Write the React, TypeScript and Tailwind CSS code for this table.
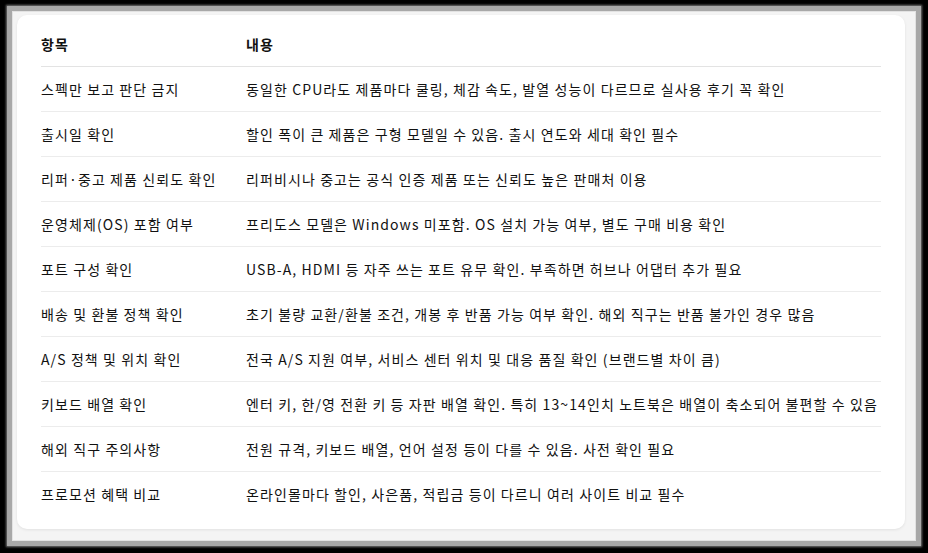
const ROWS: [string, string][] = [
  ["스펙만 보고 판단 금지", "동일한 CPU라도 제품마다 쿨링, 체감 속도, 발열 성능이 다르므로 실사용 후기 꼭 확인"],
  ["출시일 확인", "할인 폭이 큰 제품은 구형 모델일 수 있음. 출시 연도와 세대 확인 필수"],
  ["리퍼·중고 제품 신뢰도 확인", "리퍼비시나 중고는 공식 인증 제품 또는 신뢰도 높은 판매처 이용"],
  ["운영체제(OS) 포함 여부", "프리도스 모델은 Windows 미포함. OS 설치 가능 여부, 별도 구매 비용 확인"],
  ["포트 구성 확인", "USB-A, HDMI 등 자주 쓰는 포트 유무 확인. 부족하면 허브나 어댑터 추가 필요"],
  ["배송 및 환불 정책 확인", "초기 불량 교환/환불 조건, 개봉 후 반품 가능 여부 확인. 해외 직구는 반품 불가인 경우 많음"],
  ["A/S 정책 및 위치 확인", "전국 A/S 지원 여부, 서비스 센터 위치 및 대응 품질 확인 (브랜드별 차이 큼)"],
  ["키보드 배열 확인", "엔터 키, 한/영 전환 키 등 자판 배열 확인. 특히 13~14인치 노트북은 배열이 축소되어 불편할 수 있음"],
  ["해외 직구 주의사항", "전원 규격, 키보드 배열, 언어 설정 등이 다를 수 있음. 사전 확인 필요"],
  ["프로모션 혜택 비교", "온라인몰마다 할인, 사은품, 적립금 등이 다르니 여러 사이트 비교 필수"],
];

export default function App() {
  return (
    <div className="w-[928px] h-[553px] bg-black pt-[6px] pl-[7px] font-['Noto_Sans_CJK_KR',sans-serif]">
      {/* screenshot frame */}
      <div className="w-[914px] h-[540px] border-[5px] border-[#a8a8a8] shadow-[0_0_2px_1px_#777] bg-[#e2e2e2] p-[1px]">
        <div className="w-full h-full bg-[#f4f4f4] pt-[3px] pl-[4px]">
          <div className="w-[888px] h-[514px] bg-white rounded-[10px] shadow-[0_1px_3px_rgba(0,0,0,0.08)] px-[24px] pt-[7px]">
            <div className="grid grid-cols-[205px_1fr] h-[45px] items-center border-b border-[#e3e3e3] text-[14px] tracking-[1.1px] font-bold text-[#111]">
              <div>항목</div>
              <div>내용</div>
            </div>
            {ROWS.map(([k, v], i) => (
              <div
                key={i}
                className="grid grid-cols-[205px_1fr] h-[45px] items-center border-b border-[#ececec] last:border-b-0 text-[14px] tracking-[1.1px] text-[#111] whitespace-nowrap"
              >
                <div>{k}</div>
                <div>{v}</div>
              </div>
            ))}
          </div>
        </div>
      </div>
    </div>
  );
}
